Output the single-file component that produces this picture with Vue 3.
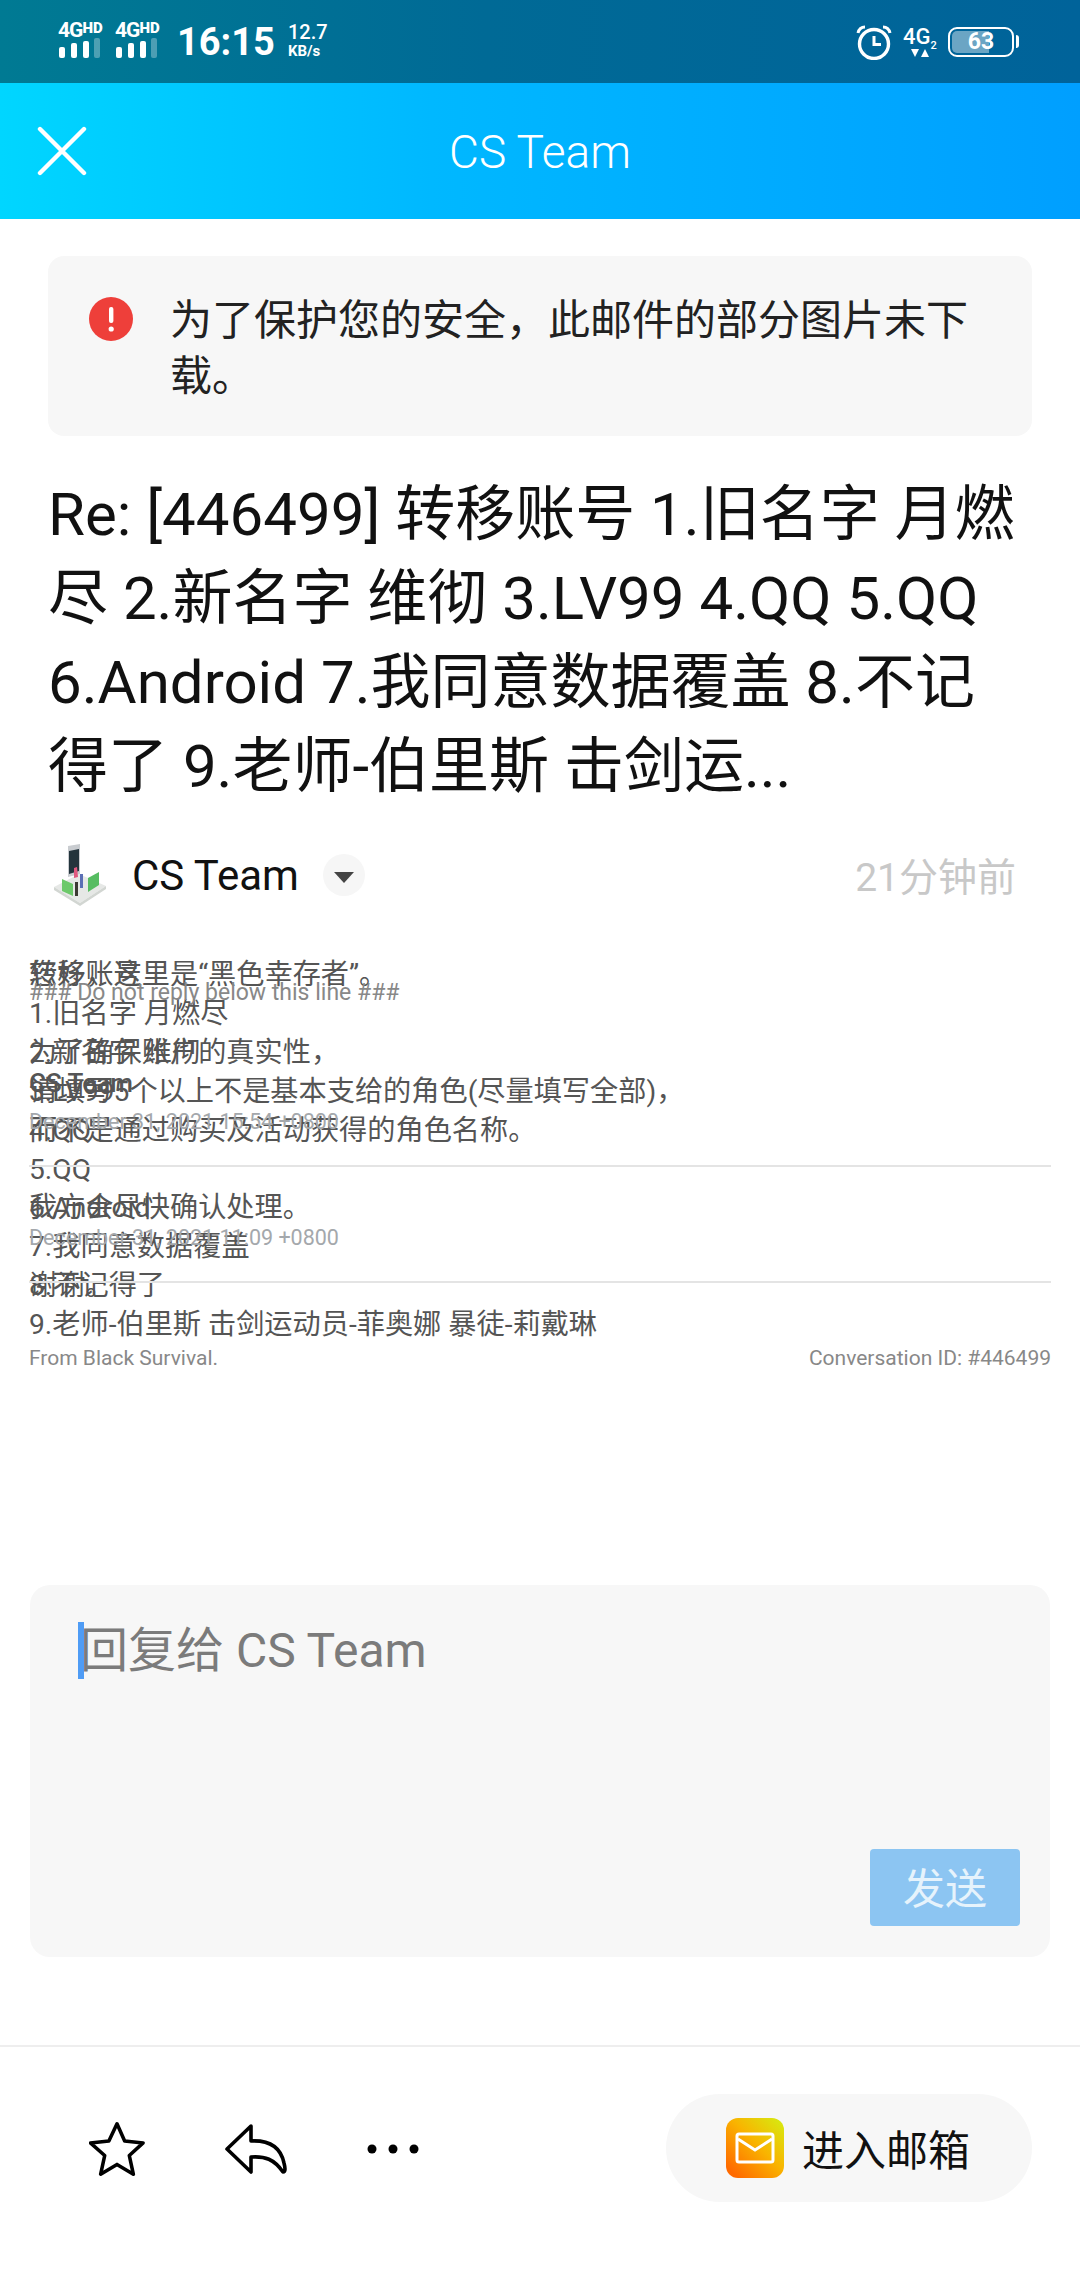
<script setup>
const formLines = [
  "转移账号",
  "1.旧名字 月燃尽",
  "2.新名字 维彻",
  "3.LV99",
  "4.QQ",
  "5.QQ",
  "6.Android",
  "7.我同意数据覆盖",
  "8.不记得了",
  "9.老师-伯里斯 击剑运动员-菲奥娜 暴徒-莉戴琳",
];

const greetingLines = [
  "您好，这里是“黑色幸存者”。",
  "",
  "为了确保账户的真实性，",
  "请填写5个以上不是基本支给的角色(尽量填写全部)，",
  "而不是通过购买及活动获得的角色名称。",
  "",
  "我方会尽快确认处理。",
  "",
  "谢谢。",
];
</script>

<template>
  <div class="page">
    <div class="status-bar">
      <div class="status-left">
        <div class="signal" v-for="n in 2" :key="n">
          <span class="net">4G<sup>HD</sup></span>
          <svg width="44" height="20" viewBox="0 0 44 20">
            <rect x="1" y="9" width="6" height="11" rx="2" fill="#fff" />
            <rect x="13" y="5" width="6" height="15" rx="2" fill="#fff" />
            <rect x="25" y="3" width="6" height="17" rx="2" fill="#fff" />
            <rect x="36" y="0" width="6" height="20" rx="2" fill="#fff" opacity="0.3" />
          </svg>
        </div>
        <span class="time">16:15</span>
        <span class="speed">12.7<br /><small>KB/s</small></span>
      </div>
      <div class="status-right">
        <svg width="36" height="36" viewBox="0 0 36 36" fill="none" stroke="#fff">
          <circle cx="18" cy="20" r="14.5" stroke-width="3.4" />
          <path d="M18 12v8.5h7" stroke-width="3" />
          <path d="M2 9c1-4 4-6 7-6M34 9c-1-4-4-6-7-6" stroke-width="3" />
        </svg>
        <div class="net-two">
          <span>4G<sub>2</sub></span>
          <svg width="18" height="9" viewBox="0 0 18 9" fill="#fff"><path d="M0 0h8L4 8zM10 8l4-8 4 8z" /></svg>
        </div>
        <div class="battery">
          <div class="battery-fill"></div>
          <span>63</span>
        </div>
      </div>
    </div>

    <header class="top-bar">
      <svg class="close" width="50" height="50" viewBox="0 0 50 50" fill="none" stroke="#fff" stroke-width="4.4" stroke-linecap="round">
        <path d="M3 3l44 44M47 3L3 47" />
      </svg>
      <h1>CS Team</h1>
    </header>

    <div class="notice">
      <svg class="notice-icon" width="44" height="44" viewBox="0 0 44 44">
        <circle cx="22" cy="22" r="22" fill="#ee3f3a" />
        <rect x="20" y="10" width="4.4" height="16" rx="2" fill="#fff" />
        <circle cx="22.2" cy="32" r="2.6" fill="#fff" />
      </svg>
      <p>为了保护您的安全，此邮件的部分图片未下载。</p>
    </div>

    <h2 class="subject">Re: [446499] 转移账号 1.旧名字 月燃尽 2.新名字 维彻 3.LV99 4.QQ 5.QQ 6.Android 7.我同意数据覆盖 8.不记得了 9.老师-伯里斯 击剑运...</h2>

    <div class="sender">
      <svg class="avatar" width="56" height="62" viewBox="0 0 56 62">
        <path d="M2 43l25-13 27 12-26 17z" fill="#e6e8e6" />
        <path d="M2 43l26 16v3L2 46zM54 42l-26 17v3l26-17z" fill="#d2d6d2" />
        <path d="M16 2l12-2v30l-12 3z" fill="#c9ccd0" />
        <path d="M17 7l10-2v22l-10 3z" fill="#23343c" />
        <path d="M10 35l11 5v12l-11-5z" fill="#6cc96a" />
        <path d="M36 34l11-6v13l-11 7z" fill="#57bd62" />
        <path d="M22 24l3-1 1 10-4 1z" fill="#e0587e" />
        <rect x="28" y="30" width="3" height="14" fill="#5b6fb5" />
        <rect x="23" y="38" width="3" height="14" fill="#3c3a33" />
      </svg>
      <span class="sender-name">CS Team</span>
      <span class="caret"><i></i></span>
      <span class="ago">21分钟前</span>
    </div>

    <div class="mail-body">
      <!-- the mail's three text blocks collapse onto each other in the original -->
      <div class="layer-form">
        <p v-for="(line, i) in formLines" :key="i">{{ line }}</p>
      </div>
      <div class="layer-greeting">
        <p v-for="(line, i) in greetingLines" :key="i">{{ line || "&nbsp;" }}</p>
      </div>
      <div class="layer-thread">
        <p class="no-reply">### Do not reply below this line ###</p>
        <div class="thread-item first">
          <strong>CS Team</strong>
          <time>December 31, 2021 15:54 +0800</time>
        </div>
        <div class="thread-item second">
          <time>December 31, 2021 11:09 +0800</time>
        </div>
      </div>
      <div class="mail-foot">
        <span>From Black Survival.</span>
        <span>Conversation ID: #446499</span>
      </div>
    </div>

    <div class="reply-box">
      <div class="reply-input"><i class="cursor"></i>回复给 CS Team</div>
      <button class="send">发送</button>
    </div>

    <footer class="bottom-bar">
      <div class="actions">
        <svg width="56" height="56" viewBox="0 0 60 60" fill="none" stroke="#000" stroke-width="3.8" stroke-linejoin="round">
          <path d="M30 3l8.200 18.500 19.800 2-14.800 13.500 4.300 20-17.500-10.500-17.500 10.500 4.300-20L1.500 23.500l19.800-2z" />
        </svg>
        <svg width="62" height="50" viewBox="0 0 62 50" fill="none" stroke="#000" stroke-width="3.6" stroke-linejoin="round">
          <path d="M26 2L2 25l24 23V33c14-1 23 2 32 15 3 0 2-5 1-9-3-14-13-23-33-22z" />
        </svg>
        <svg width="52" height="12" viewBox="0 0 52 12" fill="#000">
          <circle cx="5" cy="6" r="4.500" />
          <circle cx="26" cy="6" r="4.500" />
          <circle cx="47" cy="6" r="4.500" />
        </svg>
      </div>
      <button class="to-mailbox">
        <span class="mail-logo">
          <svg width="40" height="32" viewBox="0 0 40 32" fill="none" stroke="#fff" stroke-width="3">
            <rect x="2" y="2" width="36" height="28" rx="2" />
            <path d="M3 7l17 11L37 7" />
          </svg>
        </span>
        <span class="to-mailbox-label">进入邮箱</span>
      </button>
    </footer>
  </div>
</template>

<style scoped>
* {
  box-sizing: border-box;
  margin: 0;
  padding: 0;
}

.page {
  width: 1080px;
  height: 2280px;
  display: flex;
  flex-direction: column;
  background: #fff;
  font-family: Roboto, "Noto Sans CJK SC", sans-serif;
  overflow: hidden;
}

.status-bar {
  height: 83px;
  flex: none;
  display: flex;
  justify-content: space-between;
  align-items: center;
  padding: 0 66px 0 58px;
  color: #fff;
  background: linear-gradient(90deg, #007a93, #006a96 45%, #00639a);
}

.status-left,
.status-right {
  display: flex;
  align-items: center;
}

.signal {
  width: 57px;
  display: flex;
  flex-direction: column;
  margin-top: -3px;
}

.net {
  font-size: 21px;
  line-height: 15px;
  font-weight: 700;
  letter-spacing: -1px;
}

.net sup {
  font-size: 15px;
  font-weight: 900;
  line-height: 0;
  vertical-align: 4px;
  letter-spacing: 0;
}

.time {
  font-size: 38px;
  font-weight: 700;
  margin-left: 5px;
}

.speed {
  margin-left: 13px;
  font-size: 20px;
  line-height: 17px;
  font-weight: 500;
}

.speed small {
  font-size: 15px;
  font-weight: 700;
}

.net-two {
  margin-left: 11px;
  display: flex;
  flex-direction: column;
  align-items: center;
  width: 34px;
  font-size: 22px;
  line-height: 24px;
  font-weight: 500;
}

.net-two sub {
  font-size: 11px;
  line-height: 0;
}

.battery {
  position: relative;
  margin-left: 11px;
  width: 66px;
  height: 30px;
  border: 2.500px solid #fff;
  border-radius: 9px;
  text-align: center;
  font-size: 23px;
  line-height: 25px;
  font-weight: 700;
}

.battery::after {
  content: "";
  position: absolute;
  right: -7px;
  top: 6px;
  width: 3px;
  height: 13px;
  background: #fff;
  border-radius: 0 3px 3px 0;
}

.battery-fill {
  position: absolute;
  left: 2px;
  top: 2px;
  bottom: 2px;
  width: 37px;
  border-radius: 5px 0 0 5px;
  background: rgba(255, 255, 255, 0.42);
}

.battery span {
  position: relative;
}

.top-bar {
  position: relative;
  height: 136px;
  flex: none;
  display: flex;
  align-items: center;
  justify-content: center;
  background: linear-gradient(90deg, #00d6ff, #00b8ff 40%, #009fff);
}

.top-bar h1 {
  font-size: 46px;
  font-weight: 300;
  color: #fff;
  margin-top: 2px;
}

.close {
  position: absolute;
  left: 37px;
  top: 43px;
}

.notice {
  flex: none;
  margin: 37px 48px 0;
  height: 180px;
  padding: 37px 50px 0 41px;
  display: flex;
  gap: 37px;
  background: #f7f7f7;
  border-radius: 16px;
}

.notice-icon {
  flex: none;
  margin-top: 4px;
}

.notice p {
  font-size: 42px;
  line-height: 56px;
  color: #222;
}

.subject {
  flex: none;
  margin: 37px 48px 0;
  font-size: 60px;
  line-height: 84px;
  font-weight: 400;
  color: #111;
}

.sender {
  flex: none;
  margin: 35px 64px 0 52px;
  height: 62px;
  display: flex;
  align-items: center;
}

.sender-name {
  margin-left: 24px;
  font-size: 42px;
  color: #111;
}

.caret {
  margin-left: 24px;
  width: 42px;
  height: 42px;
  border-radius: 50%;
  background: #f6f6f6;
  display: flex;
  align-items: center;
  justify-content: center;
}

.caret i {
  display: block;
  margin-top: 4px;
  border-style: solid;
  border-width: 11px 10px 0;
  border-color: #444 transparent transparent;
}

.ago {
  margin-left: auto;
  margin-top: -3px;
  font-size: 39px;
  color: #c8c8c8;
}

.mail-body {
  position: relative;
  flex: none;
  margin: 50px 29px 0;
  color: #555;
  font-size: 28.200px;
  line-height: 38.900px;
}

.layer-greeting,
.layer-thread {
  position: absolute;
  left: 0;
  right: 0;
  top: 0;
}

.no-reply {
  margin-top: 24px;
  font-size: 23px;
  line-height: 26px;
  color: #888;
}

.thread-item {
  display: flex;
  flex-direction: column;
  border-bottom: 2px solid #e4e4e4;
}

.thread-item.first {
  margin-top: 61px;
  height: 100px;
}

.thread-item.second {
  margin-top: 58px;
  height: 58px;
}

.thread-item strong {
  font-size: 26px;
  line-height: 32px;
  font-weight: 500;
}

.thread-item time {
  font-size: 21.500px;
  line-height: 26px;
  color: #a4a8ac;
}

.thread-item.first time {
  margin-top: 10px;
}

.mail-foot {
  margin-top: 0;
  display: flex;
  justify-content: space-between;
  font-size: 21px;
  line-height: 26px;
  color: #888;
}

.reply-box {
  position: relative;
  flex: none;
  margin: 214px 30px 0;
  height: 372px;
  padding: 37px 50px 0;
  background: #f7f7f7;
  border-radius: 20px;
}

.reply-input {
  position: relative;
  font-size: 48px;
  line-height: 57px;
  color: #7b7b7b;
}

.cursor {
  position: absolute;
  left: -2px;
  top: 0;
  width: 6px;
  height: 57px;
  background: #4f9cf5;
}

.send {
  position: absolute;
  right: 30px;
  bottom: 31px;
  width: 150px;
  height: 77px;
  padding-bottom: 4px;
  border: none;
  border-radius: 4px;
  background: #8cc5f2;
  color: #e6f3fc;
  font-family: inherit;
  font-size: 42px;
}

.bottom-bar {
  margin-top: auto;
  flex: none;
  height: 235px;
  padding: 47px 48px 0 89px;
  display: flex;
  justify-content: space-between;
  align-items: flex-start;
  border-top: 2px solid #eee;
}

.actions {
  margin-top: 25px;
  height: 60px;
  display: flex;
  align-items: center;
  gap: 80px;
}

.to-mailbox {
  width: 366px;
  height: 108px;
  padding-left: 60px;
  display: flex;
  align-items: center;
  gap: 18px;
  border: none;
  border-radius: 54px;
  background: #f7f7f7;
  color: #111;
  font-family: inherit;
  font-size: 42px;
}

.to-mailbox-label {
  margin-top: -2px;
}

.mail-logo {
  width: 58px;
  height: 60px;
  display: flex;
  align-items: center;
  justify-content: center;
  border-radius: 12px;
  background: linear-gradient(45deg, #ff6a00 10%, #f9b400 55%, #d4ee12);
}
</style>
